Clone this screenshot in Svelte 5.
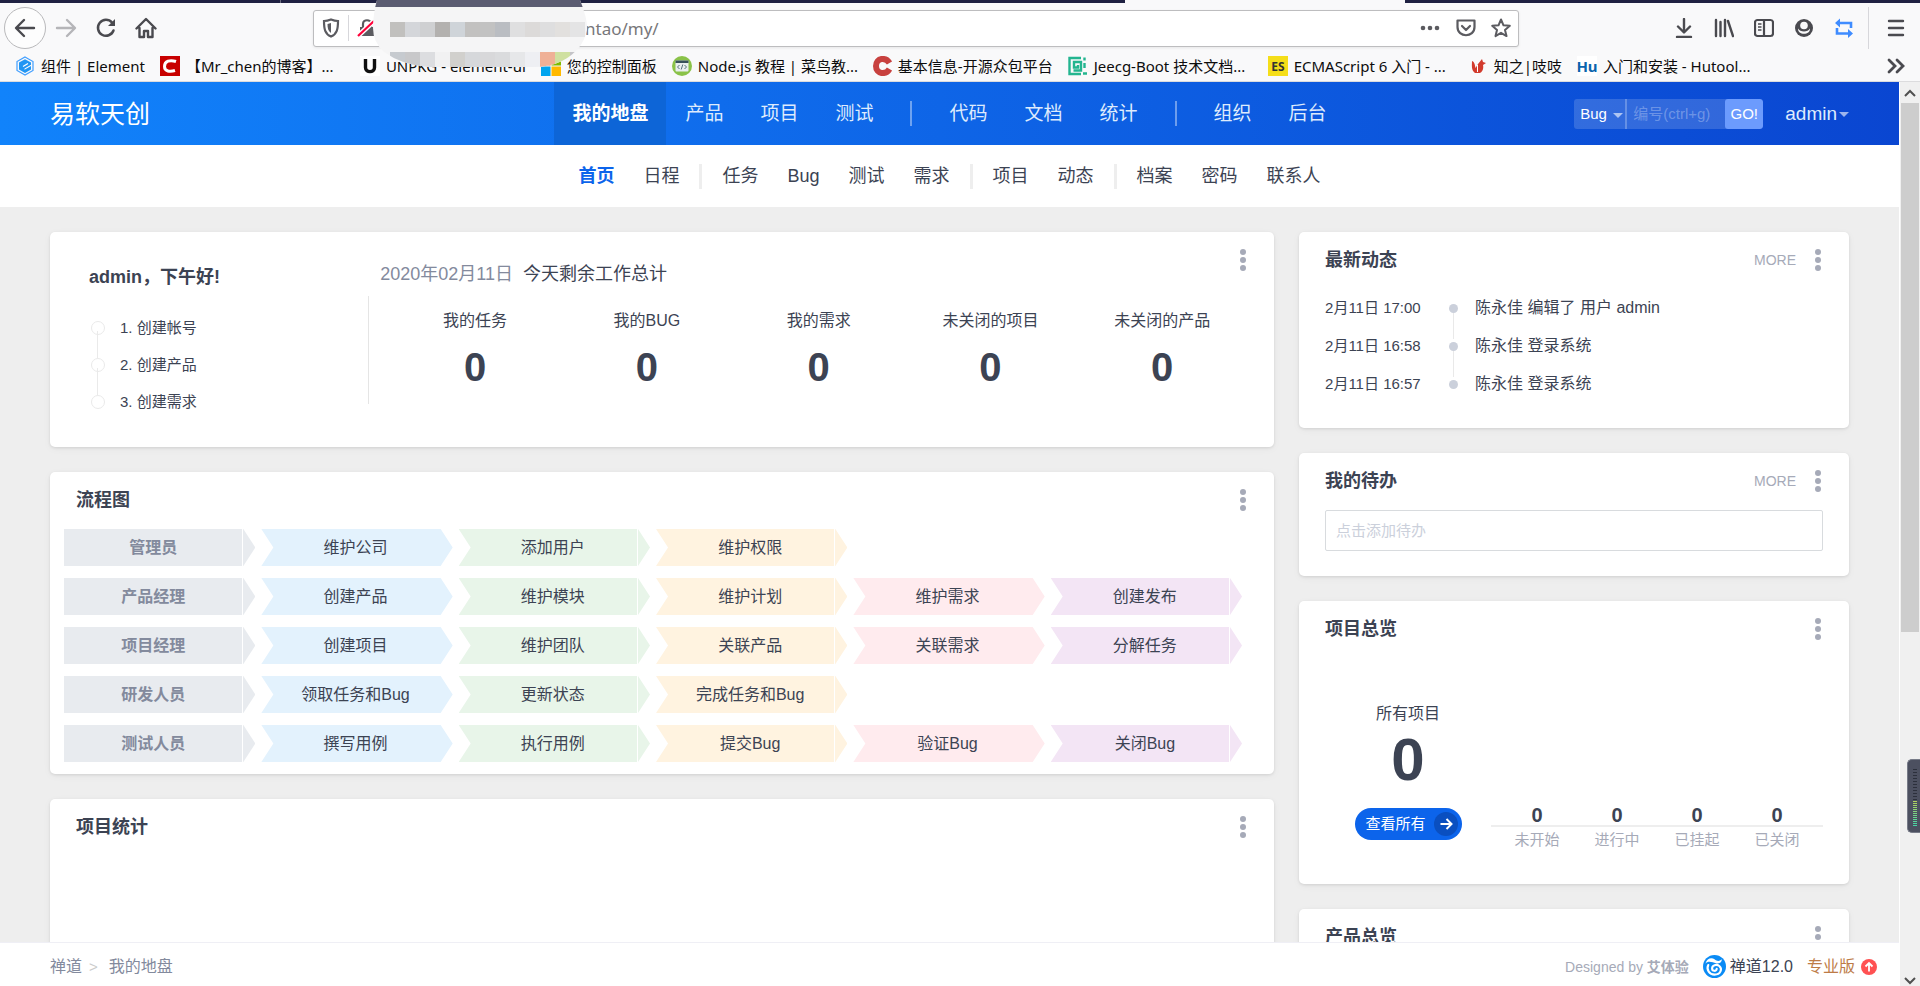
<script lang="ts">
	type Bookmark = { icon: string; label: string; wide?: boolean };
	type MenuItem = { label: string; active?: boolean };

	const bookmarks: Bookmark[] = [
		{ icon: 'element', label: '组件 | Element' },
		{ icon: 'csdn', label: '【Mr_chen的博客】...', wide: true },
		{ icon: 'unpkg', label: 'UNPKG - element-ui' },
		{ icon: 'windows', label: '您的控制面板' },
		{ icon: 'node', label: 'Node.js 教程 | 菜鸟教...', wide: true },
		{ icon: 'source', label: '基本信息-开源众包平台' },
		{ icon: 'jeecg', label: 'Jeecg-Boot 技术文档...', wide: true },
		{ icon: 'es', label: 'ECMAScript 6 入门 - ...', wide: true },
		{ icon: 'zhi', label: '知之|吱吱' },
		{ icon: 'hu', label: '入门和安装 - Hutool...' }
	];

	const mainMenu: MenuItem[][] = [
		[{ label: '我的地盘', active: true }, { label: '产品' }, { label: '项目' }, { label: '测试' }],
		[{ label: '代码' }, { label: '文档' }, { label: '统计' }],
		[{ label: '组织' }, { label: '后台' }]
	];

	const subMenu: MenuItem[][] = [
		[{ label: '首页', active: true }, { label: '日程' }],
		[{ label: '任务' }, { label: 'Bug' }, { label: '测试' }, { label: '需求' }],
		[{ label: '项目' }, { label: '动态' }],
		[{ label: '档案' }, { label: '密码' }, { label: '联系人' }]
	];

	const guides = ['1. 创建帐号', '2. 创建产品', '3. 创建需求'];

	const totals = [
		{ label: '我的任务', value: 0 },
		{ label: '我的BUG', value: 0 },
		{ label: '我的需求', value: 0 },
		{ label: '未关闭的项目', value: 0 },
		{ label: '未关闭的产品', value: 0 }
	];

	const flows = [
		['管理员', '维护公司', '添加用户', '维护权限'],
		['产品经理', '创建产品', '维护模块', '维护计划', '维护需求', '创建发布'],
		['项目经理', '创建项目', '维护团队', '关联产品', '关联需求', '分解任务'],
		['研发人员', '领取任务和Bug', '更新状态', '完成任务和Bug'],
		['测试人员', '撰写用例', '执行用例', '提交Bug', '验证Bug', '关闭Bug']
	];

	const dynamics = [
		{ time: '2月11日 17:00', text: '陈永佳 编辑了 用户 admin' },
		{ time: '2月11日 16:58', text: '陈永佳 登录系统' },
		{ time: '2月11日 16:57', text: '陈永佳 登录系统' }
	];

	const projectStates = [
		{ label: '未开始', value: 0 },
		{ label: '进行中', value: 0 },
		{ label: '已挂起', value: 0 },
		{ label: '已关闭', value: 0 }
	];

	// colour blocks of the smudge over the address, 15px each
	const upperCells = ['#c1c0be', '#d4d6da', '#cfd0d2', '#b3b1af', '#cfd4d9', '#c2c1c0', '#c2c2c2', '#babdc2', '#dfdfe0', '#dcdad9', '#dededf', '#e2e0de', '#e4e4e5'];
	const lowerCells = ['#c6cacf', '#c8c8ca', '#dcdde0', '#f1f1f2', '#d1d0cd', '#d6d8db', '#d8d8da', '#dadbdd', '#e6e7e9', '#eeeff3', '#efb096', '#cfe0a0', '#c4c4c8'];
</script>

{#snippet kebab()}
	<button class="kebab" aria-label="操作">
		<svg width="6" height="22" viewBox="0 0 6 22" fill="#a6aab8">
			<circle cx="3" cy="3" r="3" /><circle cx="3" cy="11" r="3" /><circle cx="3" cy="19" r="3" />
		</svg>
	</button>
{/snippet}

{#snippet heading(title: string, more: boolean)}
	<div class="card-heading">
		<h2>{title}</h2>
		{#if more}<a class="more" href="#more">MORE</a>{/if}
		{@render kebab()}
	</div>
{/snippet}

{#snippet favicon(name: string)}
	<svg class="favicon" width="20" height="20" viewBox="0 0 20 20">
		{#if name === 'element'}
			<path d="M10 1l8 4.500v9L10 19l-8-4.500v-9z" fill="none" stroke="#409eff" stroke-width="1.200" />
			<path d="M10 3.200l6 3.400v2.100l-6.500 3.700v1.400l6.500-3.700v3.300L10 17l-6-3.500V6.600z" fill="#2196f3" />
			<path d="M8 10.500l5-3" stroke="#fff" stroke-width="1.300" />
		{:else if name === 'csdn'}
			<rect width="20" height="20" fill="#c80000" />
			<path d="M16 5.500C10 3.500 4.500 5 4.500 10.500c0 5 5.500 5.500 10.500 4" fill="none" stroke="#fff" stroke-width="3" />
		{:else if name === 'unpkg'}
			<rect width="20" height="20" fill="#fff" />
			<path d="M5.500 3v8.500c0 5.500 9 5.500 9 0V3" fill="none" stroke="#111" stroke-width="3.400" />
		{:else if name === 'windows'}
			<path d="M0 0h9.500v9.500H0z" fill="#f25022" /><path d="M10.500 0H20v9.500h-9.500z" fill="#7fba00" />
			<path d="M0 10.500h9.500V20H0z" fill="#00a4ef" /><path d="M10.500 10.500H20V20h-9.500z" fill="#ffb900" />
		{:else if name === 'node'}
			<circle cx="10" cy="10" r="10" fill="#8ac249" />
			<rect x="3.500" y="4.500" width="13" height="11" rx="1" fill="#e9eef0" />
			<path d="M3.500 4.500h13v2.500h-13z" fill="#37505c" />
			<path d="M7.500 9L5.500 11l2 2M12.500 9l2 2-2 2M10.800 8.500l-1.600 5" fill="none" stroke="#56717c" />
		{:else if name === 'source'}
			<path d="M17.500 7C14 1 4 1.500 4 10s10 9 13.500 3" fill="none" stroke="#c8413f" stroke-width="6" />
		{:else if name === 'jeecg'}
			<path d="M13 2H1.500v16h11.500M16.500 1.500v3M16.500 7v5M19 17.500h-4M5.500 14.500h7.500V6H6v5.500h4V9" fill="none" stroke="#23b58f" stroke-width="2.400" />
		{:else if name === 'es'}
			<rect width="20" height="20" fill="#f5de19" />
			<text x="10" y="14.500" text-anchor="middle" font-size="12" font-weight="bold" fill="#333">ES</text>
		{:else if name === 'zhi'}
			<path d="M4 5c3 1 3 5 3.500 7L10 8l4-5 1 3 3 1-3 2c1 4-1 7-3 8H7c-4-3-3-8-3-12z" fill="#d23b2d" />
			<path d="M9.500 9v7" stroke="#fff" />
		{:else}
			<rect width="20" height="20" fill="#fff" />
			<text x="10" y="16" text-anchor="middle" font-size="15" font-weight="bold" fill="#0a64ad">Hu</text>
		{/if}
	</svg>
{/snippet}

<div class="window">
	<div class="browser">
		<div class="tab-strip"><span></span><span></span><span class="current"></span><span></span></div>
		<div class="toolbar">
			<div class="nav-buttons">
				<button class="round" aria-label="后退">
					<svg width="22" height="22" viewBox="0 0 22 22" fill="none" stroke="#4a4a4f" stroke-width="2.400" stroke-linecap="round" stroke-linejoin="round"><path d="M20 11H2.500M10 3l-8 8 8 8" /></svg>
				</button>
				<button aria-label="前进">
					<svg width="22" height="22" viewBox="0 0 22 22" fill="none" stroke="#b5b5b8" stroke-width="2.400" stroke-linecap="round" stroke-linejoin="round"><path d="M2 11h17.500M12 3l8 8-8 8" /></svg>
				</button>
				<button aria-label="刷新">
					<svg width="22" height="22" viewBox="0 0 22 22" fill="none" stroke="#4a4a4f" stroke-width="2.500" stroke-linecap="round"><path d="M18.500 13.500A8 8 0 1 1 17 5.500" /><path d="M20 2v7h-7z" fill="#4a4a4f" stroke="none" /></svg>
				</button>
				<button aria-label="主页">
					<svg width="22" height="22" viewBox="0 0 22 22" fill="none" stroke="#4a4a4f" stroke-width="2.400" stroke-linecap="round" stroke-linejoin="round"><path d="M1.500 11.500L11 2l9.500 9.500M4.500 11v9h4.500v-6h4v6h4.500v-9" /></svg>
				</button>
			</div>
			<div class="address">
				<svg width="18" height="20" viewBox="0 0 18 20"><path d="M9 1.500c2.500 1 4.500 1.500 7 1.500 0 8-1 13-7 15.500C3 16 2 11 2 3c2.500 0 4.500-.5 7-1.500z" fill="none" stroke="#5b5b60" stroke-width="2.200" /><path d="M9 5v10c-3-2-3.500-5-3.500-9z" fill="#5b5b60" /></svg>
				<i></i>
				<svg width="20" height="20" viewBox="0 0 20 20"><path d="M3 9h14v9H3z" fill="#5b5b60" /><path d="M6 9V6c0-5 8-5 8 0v3" fill="none" stroke="#5b5b60" stroke-width="2.200" /><path d="M1 18L17 3" stroke="#fff" stroke-width="5" /><path d="M1 18L17 3" stroke="#ff0039" stroke-width="2.200" /></svg>
				<input type="text" aria-label="地址" value="ntao/my/" />
				<svg width="22" height="20" viewBox="0 0 22 20" fill="#5b5b60"><circle cx="4" cy="10" r="2.300" /><circle cx="11" cy="10" r="2.300" /><circle cx="18" cy="10" r="2.300" /></svg>
				<svg width="20" height="20" viewBox="0 0 20 20" fill="none" stroke="#5b5b60" stroke-width="2.200" stroke-linecap="round" stroke-linejoin="round"><path d="M1.500 2.500h17V9c0 11-17 11-17 0z" /><path d="M6 8l4 4 4-4" /></svg>
				<svg width="20" height="20" viewBox="0 0 20 20"><path d="M10 1.500l2.500 5.800 6.300.5-4.800 4.100 1.500 6.200L10 14.800l-5.500 3.300L6 11.900 1.200 7.800l6.300-.5z" fill="none" stroke="#5b5b60" stroke-width="2" stroke-linejoin="round" /></svg>
			</div>
			<div class="tools">
				<svg width="20" height="20" viewBox="0 0 20 20" fill="none" stroke="#4a4a4f" stroke-width="2.400" stroke-linecap="round" stroke-linejoin="round"><path d="M10 1v13M4 8.500l6 6 6-6M3 19h14" /></svg>
				<svg width="20" height="20" viewBox="0 0 20 20" fill="none" stroke="#4a4a4f" stroke-width="2.400" stroke-linecap="round"><path d="M2 2v16M6.500 4v14M11 2v16M14 3l5 15" /></svg>
				<svg width="20" height="20" viewBox="0 0 20 20" fill="none" stroke="#4a4a4f" stroke-width="2.200"><rect x="1" y="2" width="18" height="16" rx="2.500" /><path d="M10 2v16" /><path d="M4 6h3.500M4 9h3.500M4 12h3.500" stroke-width="1.300" /></svg>
				<svg width="20" height="20" viewBox="0 0 20 20"><circle cx="10" cy="10" r="9" fill="#4a4a4f" /><circle cx="10" cy="7.500" r="3.800" fill="#f9f9fa" /><path d="M4 10.500c2 4 10 4 12 0 .5 7-12.500 7-12 0z" fill="#f9f9fa" /></svg>
				<svg width="20" height="20" viewBox="0 0 20 20" fill="none" stroke="#3f8cff" stroke-width="2.600"><path d="M5 5h12v5M3 10v5.500h12" /><path d="M6 .5v9L1 5zM14 11v9l5-4.500z" fill="#3f8cff" stroke="none" /></svg>
				<i></i>
				<svg width="18" height="20" viewBox="0 0 18 20" fill="none" stroke="#4a4a4f" stroke-width="2.400" stroke-linecap="round"><path d="M2 3h14M2 10h14M2 17h14" /></svg>
			</div>
		</div>
		<nav class="bookmarks" aria-label="书签">
			{#each bookmarks as bookmark (bookmark.icon)}
				<a href="#{bookmark.icon}" class:wide={bookmark.wide}>
					{@render favicon(bookmark.icon)}
					<span>{bookmark.label}</span>
				</a>
			{/each}
			<button class="overflow" aria-label="更多书签">
				<svg width="18" height="16" viewBox="0 0 18 16" fill="none" stroke="#4a4a4f" stroke-width="2.800" stroke-linecap="round"><path d="M2 2l6 6-6 6M10 2l6 6-6 6" /></svg>
			</button>
		</nav>
		<svg class="smudge" width="216" height="68" viewBox="0 0 216 68">
			<clipPath id="smudge-shape">
				<path d="M5 0H208Q216 20 215 30 211 50 190 61 178 67 160 67H56Q30 65 12 52 1 42 1 28 1 14 5 0z" />
			</clipPath>
			<g clip-path="url(#smudge-shape)">
				<rect width="216" height="68" fill="#f5f5f6" />
				<rect width="216" height="7" fill="#5b5c72" />
				{#each upperCells as color, i}
					<rect x={18 + i * 15} y="22" width="15" height="15" fill={color} />
				{/each}
				{#each lowerCells as color, i}
					<rect x={18 + i * 15} y="52" width="15" height="16" fill={color} />
				{/each}
			</g>
		</svg>
	</div>

	<div class="viewport">
		<div class="page">
			<header>
				<a class="company" href="#home">易软天创</a>
				<nav class="main-menu">
					{#each mainMenu as group, g}
						{#if g > 0}<i></i>{/if}
						{#each group as item (item.label)}
							<a href="#{item.label}" class:active={item.active}>{item.label}</a>
						{/each}
					{/each}
				</nav>
				<div class="header-right">
					<form class="search">
						<button type="button" class="type">Bug <b class="caret"></b></button>
						<input type="text" aria-label="编号" placeholder="编号(ctrl+g)" />
						<button type="button" class="go">GO!</button>
					</form>
					<button class="user">admin<b class="caret"></b></button>
				</div>
			</header>

			<nav class="sub-menu">
				{#each subMenu as group, g}
					{#if g > 0}<i></i>{/if}
					{#each group as item (item.label)}
						<a href="#{item.label}" class:active={item.active}>{item.label}</a>
					{/each}
				{/each}
			</nav>

			<main>
				<div class="col">
					<section class="card welcome">
						<div class="greet">
							<h2>admin，下午好!</h2>
							<ul>
								{#each guides as guide (guide)}
									<li><a href="#guide">{guide}</a></li>
								{/each}
							</ul>
						</div>
						<div class="today">
							<p><time>2020年02月11日</time>今天剩余工作总计</p>
							<div class="totals">
								{#each totals as total (total.label)}
									<div><span>{total.label}</span><strong>{total.value}</strong></div>
								{/each}
							</div>
						</div>
						{@render kebab()}
					</section>

					<section class="card">
						{@render heading('流程图', false)}
						<div class="flow">
							{#each flows as row (row[0])}
								<div class="flow-row">
									{#each row as step, i}
										<div class="step step-{i}">{step}</div>
									{/each}
								</div>
							{/each}
						</div>
					</section>

					<section class="card tall">
						{@render heading('项目统计', false)}
					</section>
				</div>

				<div class="col">
					<section class="card">
						{@render heading('最新动态', true)}
						<ul class="card-body timeline">
							{#each dynamics as item (item.time)}
								<li><time>{item.time}</time><i></i><span>{item.text}</span></li>
							{/each}
						</ul>
					</section>

					<section class="card">
						{@render heading('我的待办', true)}
						<div class="card-body">
							<input class="todo" type="text" aria-label="添加待办" placeholder="点击添加待办" />
						</div>
					</section>

					<section class="card">
						{@render heading('项目总览', false)}
						<div class="card-body overview">
							<div class="all">
								<span>所有项目</span>
								<strong>0</strong>
								<a href="#all">
									查看所有
									<svg width="24" height="24" viewBox="0 0 24 24"><circle cx="12" cy="12" r="12" fill="#0a4fc0" /><path d="M6.500 12h11M12.500 7l5 5-5 5" fill="none" stroke="#fff" stroke-width="2" /></svg>
								</a>
							</div>
							<div class="states">
								{#each projectStates as state (state.label)}
									<div><strong>{state.value}</strong><span>{state.label}</span></div>
								{/each}
							</div>
						</div>
					</section>

					<section class="card tall">
						{@render heading('产品总览', false)}
					</section>
				</div>
			</main>

			<footer>
				<a href="#zentao">禅道</a><span class="gt">&gt;</span><a href="#my">我的地盘</a>
				<div class="powered">
					<span class="designed">Designed by <b>艾体验</b></span>
					<a class="version" href="#version">
						<svg width="23" height="23" viewBox="0 0 24 24"><circle cx="12" cy="12" r="12" fill="#0a8bf5" /><path d="M2.500 9C4 3.500 9 2 12 4.500c2.500 2 5 2.500 7.500 0 .5 3-2.500 5-6 4C10 7.500 5 5.500 2.500 9z" fill="#fff" /><path d="M5.500 10.500C3 15.500 7 20.500 12 20.500c6.500 0 8.500-6 5-9-3-2.300-7.500-1-7.500 2.500 0 3 4.500 3.500 4.800.5" fill="none" stroke="#fff" stroke-width="2.200" stroke-linecap="round" /></svg>
						禅道12.0
					</a>
					<a class="pro" href="#pro">
						专业版
						<svg width="16" height="16" viewBox="0 0 16 16"><circle cx="8" cy="8" r="8" fill="#ff5152" /><path d="M8 12.500V4M4.500 7.500L8 4l3.500 3.500" fill="none" stroke="#fff" stroke-width="1.800" /></svg>
					</a>
				</div>
			</footer>
		</div>

		<div class="scrollbar">
			<svg width="12" height="8" viewBox="0 0 12 8" fill="none" stroke="#505050" stroke-width="2"><path d="M1 7l5-5 5 5" /></svg>
			<div class="track"><div class="thumb"></div></div>
			<svg width="12" height="8" viewBox="0 0 12 8" fill="none" stroke="#505050" stroke-width="2"><path d="M1 1l5 5 5-5" /></svg>
		</div>
	</div>

	<div class="meter"><i></i><i class="level"></i></div>
</div>

<style>
	:global(body) {
		margin: 0;
		overflow: hidden;
	}

	.window {
		position: relative;
		display: flex;
		flex-direction: column;
		height: 100vh;
		overflow: hidden;
		font-family: 'Liberation Sans', 'Noto Sans CJK SC', sans-serif;
		font-size: 16px;
		line-height: 24px;
		color: #3c4353;
	}

	a {
		color: inherit;
		text-decoration: none;
	}

	button,
	input {
		font-family: inherit;
		color: inherit;
		border: 0;
		padding: 0;
		margin: 0;
		background: none;
		box-sizing: border-box;
		outline: none;
	}

	h2,
	p,
	ul {
		margin: 0;
		padding: 0;
		list-style: none;
	}

	h2 {
		font-size: 18px;
		font-weight: bold;
	}

	svg {
		display: block;
		flex-shrink: 0;
	}

	/* browser */
	.browser {
		position: relative;
		display: flex;
		flex-direction: column;
		height: 82px;
		box-sizing: border-box;
		flex-shrink: 0;
		background: #f9f9fa;
		border-bottom: 1px solid #dcdcde;
		font-family: 'Noto Sans', 'Noto Sans CJK SC', sans-serif;
	}

	.tab-strip {
		display: grid;
		grid-template-columns: 281fr 844fr 280fr 515fr;
		height: 3px;
	}

	.tab-strip span {
		background: #1f2142;
	}

	.tab-strip span:first-child {
		border-right: 1px solid #6b6c80;
	}

	.tab-strip .current {
		background: #f9f9fa;
	}

	.toolbar {
		display: flex;
		align-items: center;
		height: 50px;
		padding: 0 15px 0 4px;
	}

	.nav-buttons {
		display: flex;
		align-items: center;
		flex: 0 0 309px;
	}

	.nav-buttons button {
		display: flex;
		align-items: center;
		justify-content: center;
		width: 40px;
		height: 42px;
	}

	.nav-buttons .round {
		width: 42px;
		border: 1px solid #b9b9bb;
		border-radius: 50%;
		background: #fdfdfd;
	}

	.address {
		display: flex;
		align-items: center;
		gap: 8px;
		flex: 1;
		height: 37px;
		box-sizing: border-box;
		padding: 0 7px 0 8px;
		background: #fff;
		border: 1px solid #bdbdbf;
		border-radius: 3px;
		box-shadow: 0 1px 3px rgba(0, 0, 0, 0.08);
	}

	.address i,
	.tools i {
		width: 1px;
		height: 26px;
		background: #d7d7db;
	}

	.address input {
		flex: 1;
		padding-left: 200px;
		font-size: 17px;
		color: #77777a;
	}

	.address svg:nth-last-child(-n + 3) {
		margin-left: 7px;
	}

	.tools {
		display: flex;
		align-items: center;
		justify-content: flex-end;
		gap: 20px;
		flex: 0 0 386px;
	}

	.tools i {
		height: 42px;
		margin-right: -2px;
		margin-left: -6px;
	}

	.bookmarks {
		display: flex;
		align-items: center;
		height: 26px;
		padding: 0 15px;
		gap: 15px;
		font-size: 15px;
		color: #0c0c0d;
		white-space: nowrap;
	}

	.bookmarks a {
		display: flex;
		align-items: center;
		gap: 6px;
	}

	.bookmarks .wide {
		width: 185px;
	}

	.overflow {
		margin-left: auto;
	}

	.smudge {
		position: absolute;
		left: 372px;
		top: 0;
	}

	/* page */
	.viewport {
		display: flex;
		flex: 1;
		min-height: 0;
	}

	.page {
		display: flex;
		flex-direction: column;
		flex: 1;
		min-width: 0;
	}

	header {
		display: grid;
		grid-template-columns: 1fr auto 1fr;
		align-items: center;
		height: 63px;
		flex-shrink: 0;
		padding: 0 50px;
		background: linear-gradient(90deg, #1183fb 0%, #0f6cec 38%, #0a46d1 100%);
		color: #fff;
	}

	.company {
		font-size: 25px;
	}

	.main-menu,
	.sub-menu {
		display: flex;
		align-items: center;
		justify-content: center;
		gap: 1px;
	}

	.main-menu a {
		padding: 0 18px;
		font-size: 19px;
		line-height: 63px;
		color: #deebfd;
	}

	.main-menu .active {
		background: #0d65d7;
		color: #fff;
		font-weight: bold;
	}

	.main-menu i {
		width: 2px;
		height: 25px;
		margin: 0 18px;
		background: rgba(255, 255, 255, 0.4);
	}

	.header-right {
		display: flex;
		align-items: center;
		justify-content: flex-end;
		gap: 22px;
	}

	.search {
		display: flex;
		height: 30px;
		border-radius: 3px;
		overflow: hidden;
		background: rgba(255, 255, 255, 0.16);
		font-size: 15px;
	}

	.search .type {
		width: 53px;
		border-right: 2px solid rgba(255, 255, 255, 0.25);
		font-size: 15px;
		text-align: left;
		padding-left: 6px;
		white-space: nowrap;
	}

	.search input {
		width: 98px;
		padding: 0 6px;
		font-size: 15px;
	}

	.search input::placeholder {
		color: rgba(255, 255, 255, 0.3);
		opacity: 1;
	}

	.search .go {
		width: 38px;
		font-size: 15px;
		border-radius: 3px;
		background: #6c9bfd;
	}

	.caret {
		display: inline-block;
		border: 5px solid transparent;
		border-top-color: rgba(255, 255, 255, 0.6);
		border-bottom-width: 0;
		vertical-align: middle;
		margin-left: 2px;
	}

	.user {
		font-size: 19px;
		line-height: 30px;
		color: #deebfd;
	}

	.sub-menu {
		height: 62px;
		flex-shrink: 0;
		background: #fff;
		font-size: 18px;
	}

	.sub-menu a {
		padding: 0 14px;
	}

	.sub-menu .active {
		color: #0c64eb;
		font-weight: bold;
	}

	.sub-menu i {
		width: 3px;
		height: 25px;
		margin: 0 5px;
		background: #eee;
	}

	main {
		display: grid;
		grid-template-columns: minmax(0, 69fr) minmax(0, 31fr);
		align-items: start;
		gap: 25px;
		flex: 1;
		min-height: 0;
		overflow: hidden;
		padding: 25px 50px 0;
		background: #eee;
	}

	.col {
		display: flex;
		flex-direction: column;
		gap: 25px;
	}

	.card {
		position: relative;
		background: #fff;
		border-radius: 5px;
		box-shadow: 0 1px 3px rgba(0, 0, 0, 0.1), 0 2px 8px rgba(0, 0, 0, 0.04);
	}

	.card.tall {
		min-height: 300px;
	}

	.card-heading {
		display: flex;
		align-items: center;
		padding: 16px 25px 16px 26px;
	}

	.card-heading h2 {
		margin-right: auto;
	}

	.more {
		margin-right: 16px;
		font-size: 14px;
		color: #a6aab8;
	}

	.kebab {
		display: flex;
		justify-content: center;
		width: 12px;
	}

	.card-body {
		padding: 1px 26px 25px;
	}

	.welcome {
		display: flex;
	}

	.welcome > .kebab {
		position: absolute;
		top: 17px;
		right: 25px;
	}

	.greet {
		width: 26%;
		padding: 33px 0 0 39px;
		box-sizing: border-box;
	}

	.greet ul {
		margin-top: 20px;
		font-size: 15px;
	}

	.greet li {
		position: relative;
		display: flex;
		align-items: center;
		gap: 15px;
		height: 37px;
		padding-left: 2px;
	}

	.greet li::before {
		content: '';
		width: 14px;
		height: 14px;
		box-sizing: border-box;
		border: 1px solid #eaeaea;
		border-radius: 50%;
	}

	.greet li:not(:last-child)::after {
		content: '';
		position: absolute;
		left: 8px;
		top: 22px;
		width: 1px;
		height: 27px;
		background: #eaeaea;
	}

	.today {
		flex: 1;
		padding: 30px 26px 43px 0;
	}

	.today p {
		padding-left: 12px;
		font-size: 18px;
	}

	.today time {
		margin-right: 10px;
		color: #838a9d;
	}

	.totals {
		display: grid;
		grid-template-columns: repeat(5, 1fr);
		margin-top: 10px;
		padding: 13px 0 13px 20px;
		border-left: 1px solid #e5e5e5;
		text-align: center;
	}

	.totals span,
	.totals strong {
		display: block;
	}

	.totals strong {
		margin-top: 10px;
		font-size: 40px;
		line-height: 48px;
	}

	.flow {
		display: flex;
		flex-direction: column;
		gap: 12px;
		padding: 1px 32px 12px 14px;
	}

	.flow-row {
		display: grid;
		grid-template-columns: repeat(6, 1fr);
		gap: 6px;
	}

	.step {
		position: relative;
		padding-right: 3px;
		line-height: 37px;
		text-align: center;
		clip-path: polygon(0 0, calc(100% - 12px) 0, 100% 50%, calc(100% - 12px) 100%, 0 100%, 12px 50%);
	}

	.step::after {
		content: '';
		position: absolute;
		top: 0;
		bottom: 0;
		right: 12px;
		width: 1px;
		background: #fff;
	}

	.step-0 {
		padding-right: 13px;
		background: #e8ebef;
		color: #838a9d;
		font-weight: bold;
		clip-path: polygon(0 0, calc(100% - 12px) 0, 100% 50%, calc(100% - 12px) 100%, 0 100%);
	}

	.step-1 {
		background: #e3f2fd;
	}

	.step-2 {
		background: #e8f5e9;
	}

	.step-3 {
		background: #fff3e0;
	}

	.step-4 {
		background: #ffebee;
	}

	.step-5 {
		background: #f3e5f5;
	}

	.step-1::after,
	.step-4::after {
		content: none;
	}

	.timeline li {
		position: relative;
		display: grid;
		grid-template-columns: 107px 9px 1fr;
		align-items: center;
		gap: 17px;
		height: 38px;
	}

	.timeline time {
		font-size: 15px;
		white-space: nowrap;
	}

	.timeline i {
		height: 9px;
		border-radius: 50%;
		background: #cbd0db;
	}

	.timeline li:not(:last-child)::after {
		content: '';
		position: absolute;
		left: 128px;
		top: 24px;
		width: 1px;
		height: 26px;
		background: #e9e9e9;
	}

	.todo {
		display: block;
		width: 100%;
		height: 41px;
		padding: 0 10px;
		border: 1px solid #d8dbde;
		border-radius: 2px;
		font-size: 15px;
	}

	.todo::placeholder {
		color: #cbd0db;
		opacity: 1;
	}

	.overview {
		display: flex;
		align-items: flex-end;
		padding-top: 45px;
	}

	.all {
		display: flex;
		flex-direction: column;
		align-items: center;
		width: 166px;
		margin-bottom: 19px;
	}

	.all strong {
		margin: 4px 0 18px;
		font-size: 60px;
		line-height: 60px;
	}

	.all a {
		display: flex;
		align-items: center;
		gap: 8px;
		height: 32px;
		padding: 0 4px 0 11px;
		border-radius: 16px;
		background: #0c64eb;
		color: #fff;
		font-size: 15px;
		white-space: nowrap;
	}

	.states {
		position: relative;
		display: grid;
		grid-template-columns: repeat(4, 1fr);
		flex: 1;
		margin-bottom: 6px;
		padding: 0 6px;
		text-align: center;
	}

	.states::after {
		content: '';
		position: absolute;
		left: 0;
		right: 0;
		top: 22px;
		height: 2px;
		background: #eee;
	}

	.states strong,
	.states span {
		display: block;
	}

	.states strong {
		font-size: 20px;
		line-height: 24px;
	}

	.states span {
		font-size: 15px;
		line-height: 26px;
		color: #a6aab8;
	}

	footer {
		display: flex;
		align-items: center;
		height: 44px;
		flex-shrink: 0;
		box-sizing: border-box;
		padding: 4px 22px 0 50px;
		border-top: 1px solid #efeff5;
		background: #fff;
		color: #838a9d;
	}

	.gt {
		margin: 0 11px 0 7px;
		font-size: 15px;
		color: #cbcbcb;
	}

	.powered {
		display: flex;
		align-items: center;
		gap: 14px;
		margin-left: auto;
	}

	.designed {
		font-size: 14px;
		color: #a6aab8;
	}

	.version,
	.pro {
		display: flex;
		align-items: center;
		gap: 4px;
	}

	.version {
		color: #3c4353;
	}

	.pro {
		gap: 6px;
		color: #bd7b46;
	}

	.scrollbar {
		display: flex;
		flex-direction: column;
		align-items: center;
		width: 21px;
		box-sizing: border-box;
		flex-shrink: 0;
		padding: 7px 0 1px;
		border-left: 1px solid #fff;
		background: #f0f0f0;
	}

	.track {
		flex: 1;
		align-self: stretch;
		padding: 6px 1px;
	}

	.thumb {
		height: 61%;
		background: #cdcdcd;
	}

	/* sound level widget docked on the screen edge */
	.meter {
		position: absolute;
		right: 0;
		top: 759px;
		width: 13px;
		height: 74px;
		box-sizing: border-box;
		padding: 9px 3px 8px 5px;
		border: 1px solid #777b88;
		border-right: 0;
		border-radius: 5px 0 0 5px;
		background: #4c5060;
	}

	.meter i {
		display: block;
		height: 32px;
		background: repeating-linear-gradient(#2c303c 0 1px, #4c5060 1px 3px);
	}

	.meter .level {
		height: 25px;
		background: repeating-linear-gradient(transparent 0 1px, #4c5060 1px 2px), linear-gradient(#b4d35c, #43d6a8);
	}
</style>
